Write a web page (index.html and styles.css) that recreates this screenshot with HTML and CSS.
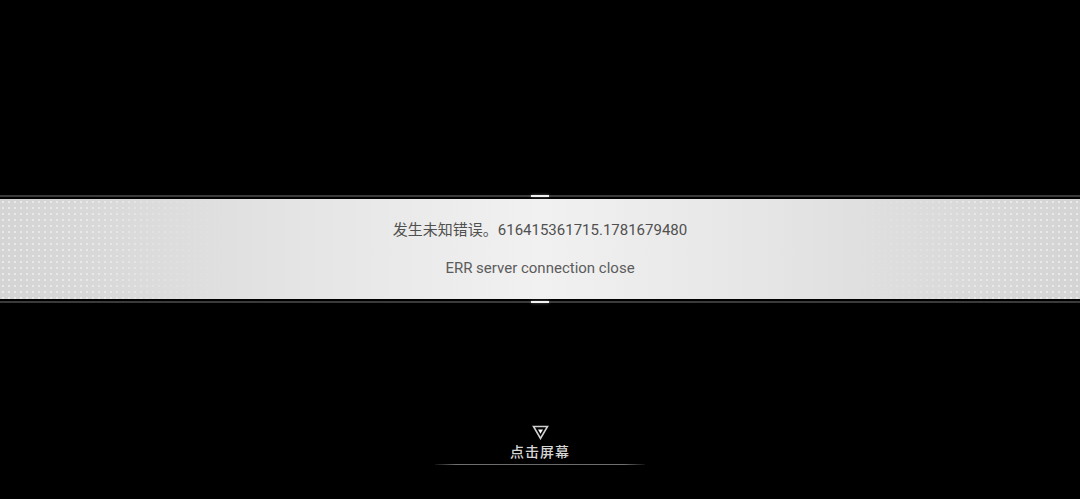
FILE: index.html
```html
<!DOCTYPE html>
<html lang="zh">
<head>
<meta charset="utf-8">
<link rel="stylesheet" href="styles.css">
</head>
<body>
<div class="screen">
  <div class="spacer-top"></div>
  <div class="edge edge-top"><span class="tab"></span></div>
  <div class="band">
    <div class="band-msg">发生未知错误。616415361715.1781679480</div>
    <div class="band-sub">ERR server connection close</div>
  </div>
  <div class="edge edge-bottom"><span class="tab"></span></div>
  <div class="spacer-mid"></div>
  <div class="tap">
    <svg class="tap-icon" width="17" height="15" viewBox="0 0 17 15">
      <path d="M1.5 1.5 H15.5 L8.5 13.5 Z" fill="none" stroke="#d0d0d0" stroke-width="1.6" stroke-linejoin="miter"/>
      <path d="M6 4.5 H11 L8.5 8.8 Z" fill="#ffffff"/>
    </svg>
    <div class="tap-text">点击屏幕</div>
    <div class="tap-line"></div>
  </div>
</div>
</body>
</html>
```
FILE: styles.css
```css
html, body {
  margin: 0;
  padding: 0;
  background: #000;
}
.screen {
  width: 1080px;
  height: 499px;
  background: #000;
  display: flex;
  flex-direction: column;
  overflow: hidden;
  font-family: Roboto, "Noto Sans CJK SC", sans-serif;
}
.spacer-top {
  height: 195px;
  flex: none;
}
.edge {
  height: 2px;
  background: #3a3a3a;
  display: flex;
  justify-content: center;
  flex: none;
}
.edge-top {
  margin-bottom: 2px;
}
.edge-bottom {
  margin-top: 2px;
}
.tab {
  width: 18px;
  height: 2px;
  background: #f2f2f2;
  box-shadow: 0 0 3px rgba(255,255,255,0.4);
}
.band {
  height: 100px;
  flex: none;
  background: linear-gradient(90deg, #d4d4d4 0%, #dadada 12%, #e6e6e6 30%, #f1f1f1 50%, #e6e6e6 70%, #dadada 88%, #d4d4d4 100%);
  position: relative;
  display: flex;
  flex-direction: column;
  align-items: center;
}
.band::before {
  content: "";
  position: absolute;
  inset: 0;
  background: radial-gradient(circle, rgba(255,255,255,0.5) 0.9px, transparent 1.4px) 0 0 / 6px 6px;
  -webkit-mask-image: linear-gradient(90deg, #000 0%, rgba(0,0,0,0.8) 10%, rgba(0,0,0,0.3) 15%, transparent 22%, transparent 78%, rgba(0,0,0,0.3) 85%, rgba(0,0,0,0.8) 90%, #000 100%);
  mask-image: linear-gradient(90deg, #000 0%, rgba(0,0,0,0.8) 10%, rgba(0,0,0,0.3) 15%, transparent 22%, transparent 78%, rgba(0,0,0,0.3) 85%, rgba(0,0,0,0.8) 90%, #000 100%);
}
.band-msg {
  position: relative;
  margin-top: 20px;
  font-size: 15px;
  line-height: 22px;
  color: #505050;
}
.band-sub {
  position: relative;
  margin-top: 17px;
  font-size: 15px;
  line-height: 20px;
  color: #5c5c5c;
}
.spacer-mid {
  height: 122px;
  flex: none;
}
.tap {
  display: flex;
  flex-direction: column;
  align-items: center;
}
.tap-icon {
  display: block;
}
.tap-text {
  margin-top: 2px;
  font-size: 14px;
  line-height: 20px;
  color: #d6d6d6;
  font-weight: 500;
  letter-spacing: 1px;
}
.tap-line {
  margin-top: 2px;
  width: 210px;
  height: 1px;
  background: linear-gradient(90deg, rgba(90,90,90,0.2) 0%, #707070 10%, #6a6a6a 50%, #707070 90%, rgba(90,90,90,0.2) 100%);
}
```
